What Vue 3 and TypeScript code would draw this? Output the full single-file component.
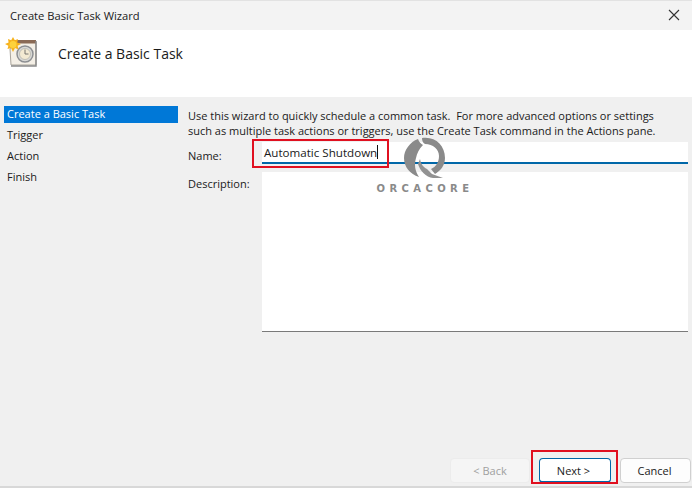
<script setup lang="ts">
const steps: string[] = ['Create a Basic Task', 'Trigger', 'Action', 'Finish']
</script>

<template>
  <div class="win">
    <div class="titlebar">
      <span>Create Basic Task Wizard</span>
      <svg class="close" width="12" height="12" viewBox="0 0 12 12"><path d="M1 1L11 11M11 1L1 11" stroke="#333" stroke-width="1.1" fill="none" /></svg>
    </div>
    <div class="header">
      <svg class="logo" width="34" height="34" viewBox="0 0 34 34">
        <path d="M9 5H31V28H6L5 12Z" fill="#f4efe6" stroke="#a9a49b" />
        <path d="M8 3H31V6.500H8Z" fill="#8a6a55" />
        <path d="M31 4V29H6" fill="none" stroke="#8b8b8b" stroke-width="1.500" />
        <circle cx="20" cy="17" r="8" fill="#d9d9d6" stroke="#8d8f92" stroke-width="1.500" />
        <circle cx="20" cy="17" r="5.500" fill="#f3ead2" stroke="#b6b6ae" stroke-width=".8" />
        <path d="M20 12.500V17H23.500" fill="none" stroke="#77756f" stroke-width="1" />
        <path d="M8 0L9.800 3.200L13 2L12.200 5.400L16 7L12.600 8.800L13.500 12.500L10 11L8 15L6 11L2.500 12L3.400 8.800L0 7L3.600 5.400L3 2L6.200 3.200Z" fill="#f7b21c" />
        <circle cx="8" cy="7.500" r="3.500" fill="#fdd23c" />
      </svg>
      <span class="heading">Create a Basic Task</span>
    </div>
    <div class="body">
      <nav class="steps">
        <div v-for="(s, i) in steps" :key="s" class="step" :class="{ active: i === 0 }">{{ s }}</div>
      </nav>
      <main class="content">
        <p class="intro">Use this wizard to quickly schedule a common task.&nbsp; For more advanced options or settings<br />such as multiple task actions or triggers, use the Create Task command in the Actions pane.</p>
        <div class="row name-row">
          <label>Name:</label>
          <div class="input">Automatic Shutdown<i class="caret"></i></div>
        </div>
        <div class="row desc-row">
          <label>Description:</label>
          <div class="textarea"></div>
        </div>
      </main>
    </div>
    <footer class="footer">
      <button class="btn disabled">&lt; Back</button>
      <button class="btn primary">Next &gt;</button>
      <button class="btn cancel">Cancel</button>
    </footer>

    <div class="mark mark-name"></div>
    <div class="mark mark-next"></div>
    <div class="watermark">
      <svg width="46" height="44" viewBox="0 0 46 44">
        <path d="M16 2C8 5 2 13 2 21C2 30 8 37 17 40C13 34 12 28 14 21C15 16 17 12 21 8C19 7 17 5 16 2Z" fill="#8a8a8a" />
        <path d="M20 1C33 -1 43 8 43 21C43 29 38 34 33 37L29 32C34 30 37 25 37 19C37 12 31 7 23 7C21 6 20 4 20 1Z" fill="#8a8a8a" />
        <path d="M18 22C19 27 21 30 25 32L30 37L41 41L31 41C24 40 18 34 16 27Z" fill="#929292" />
      </svg>
      <span>ORCACORE</span>
    </div>
  </div>
</template>

<style scoped>
.win {
  position: relative;
  width: 692px;
  height: 488px;
  display: flex;
  flex-direction: column;
  overflow: hidden;
  background: #f0f0f0;
  font-family: "Open Sans", "Noto Sans", sans-serif;
  font-size: 11px;
  color: #1a1a1a;
}
.titlebar {
  height: 30px;
  flex: none;
  box-sizing: border-box;
  padding: 0 12px 1px 10px;
  display: flex;
  align-items: center;
  justify-content: space-between;
  background: #f3f3f3;
  border-top: 1px solid #e2e2e2;
  font-size: 11.2px;
}
.header {
  height: 67px;
  flex: none;
  box-sizing: border-box;
  background: #fff;
  display: flex;
  align-items: flex-start;
  padding: 7px 0 0 5px;
}
.logo { flex: none; }
.heading {
  margin: 7px 0 0 19px;
  font-size: 14px;
  line-height: 20px;
}
.body {
  flex: 1;
  display: flex;
  min-height: 0;
  padding: 9px 4px 0 4px;
}
.steps {
  width: 174px;
  flex: none;
}
.step {
  height: 21px;
  line-height: 15px;
  padding-left: 3px;
}
.step.active {
  height: 17px;
  margin-bottom: 4px;
  background: #0078d7;
  color: #fff;
}
.content {
  flex: 1;
  min-width: 0;
  padding: 2px 0 0 10px;
}
.intro {
  margin: 0;
  line-height: 15px;
  white-space: nowrap;
}
.row {
  display: flex;
}
.row label {
  width: 74px;
  flex: none;
  padding-top: 4px;
}
.name-row {
  margin-top: 4px;
  height: 22px;
  align-items: center;
}
.input {
  flex: 1;
  height: 22px;
  box-sizing: border-box;
  background: #fff;
  border-bottom: 2px solid #0067a8;
  padding-left: 2px;
  line-height: 19px;
  font-size: 11.6px;
  display: flex;
  align-items: center;
}
.caret {
  width: 1px;
  height: 14px;
  background: #111;
}
.desc-row {
  margin-top: 8px;
}
.textarea {
  flex: 1;
  height: 160px;
  box-sizing: border-box;
  background: #fff;
  border-bottom: 1px solid #7a7a7a;
}
.footer {
  flex: none;
  height: 32px;
  box-sizing: border-box;
  padding: 2px 1px 0 0;
  display: flex;
  justify-content: flex-end;
  gap: 9px;
  border-bottom: 2px solid #d8d8d8;
}
.btn {
  width: 72px;
  height: 25px;
  box-sizing: border-box;
  border: 1px solid #d0d0d0;
  border-radius: 4px;
  background: #fdfdfd;
  font: inherit;
  color: #1a1a1a;
  padding: 0;
}
.btn.disabled {
  width: 80px;
  background: #f5f5f5;
  border-color: #ececec;
  color: #a0a0a0;
}
.btn.primary {
  border: 1px solid #0067a8;
  border-bottom-width: 2px;
  background: #fff;
  padding-right: 3px;
}
.btn.cancel {
  width: 71px;
  padding-right: 2px;
}
.mark {
  position: absolute;
  box-sizing: border-box;
  border: 2px solid #e01020;
  pointer-events: none;
}
.mark-name { left: 252px; top: 139px; width: 137px; height: 29px; }
.mark-next { left: 531px; top: 450px; width: 87px; height: 34px; }
.watermark {
  position: absolute;
  left: 378px;
  top: 137px;
  width: 94px;
  display: flex;
  flex-direction: column;
  align-items: center;
  color: #8a8a8a;
  font-size: 10px;
  font-weight: 700;
  letter-spacing: 4.400px;
  line-height: 13px;
  font-family: "DejaVu Sans", sans-serif;
}
.watermark span { margin-top: 1px; white-space: nowrap; }
</style>
